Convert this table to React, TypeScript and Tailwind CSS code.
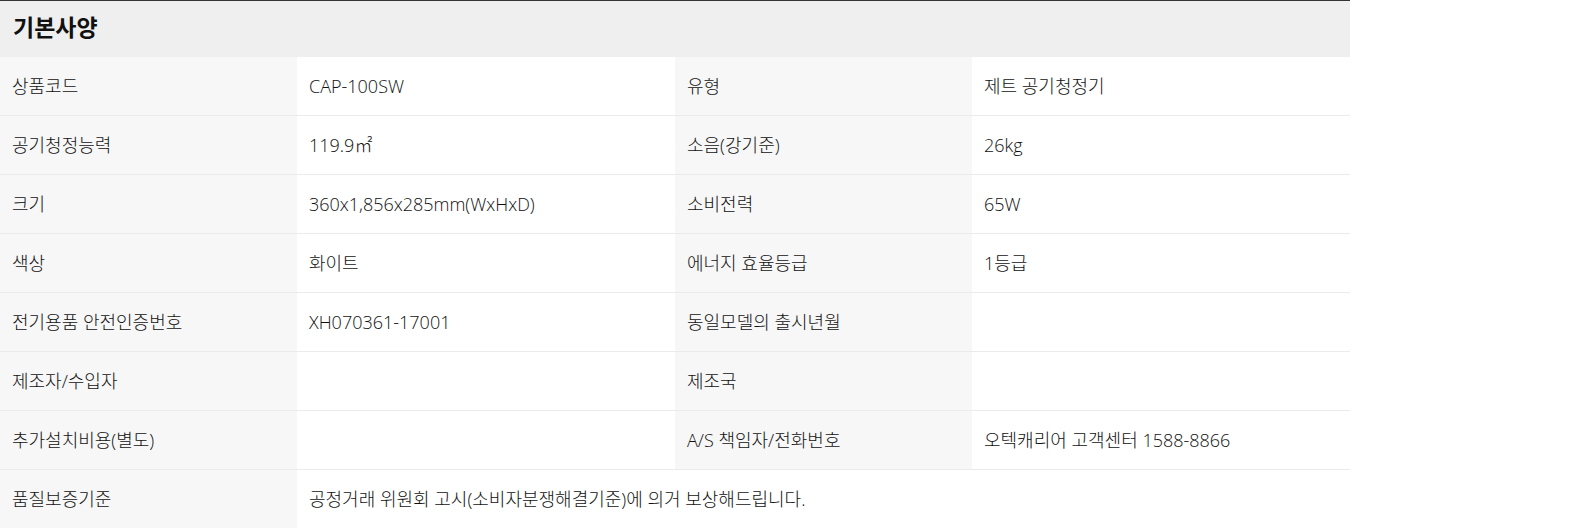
const ROWS: [string, string, string, string][] = [
  ['상품코드', 'CAP-100SW', '유형', '제트 공기청정기'],
  ['공기청정능력', '119.9㎡', '소음(강기준)', '26kg'],
  ['크기', '360x1,856x285mm(WxHxD)', '소비전력', '65W'],
  ['색상', '화이트', '에너지 효율등급', '1등급'],
  ['전기용품 안전인증번호', 'XH070361-17001', '동일모델의 출시년월', ''],
  ['제조자/수입자', '', '제조국', ''],
  ['추가설치비용(별도)', '', 'A/S 책임자/전화번호', '오텍캐리어 고객센터 1588-8866'],
];

const font = { fontFamily: '"Open Sans", "Noto Sans CJK KR", sans-serif' };

function Th({ children }: { children: string }) {
  return (
    <div className="flex items-center bg-[#f7f7f7] pl-[12px] text-[18px] font-light text-[#111]">{children}</div>
  );
}

function Td({ children, span }: { children: string; span?: boolean }) {
  return (
    <div className={`flex items-center bg-white pl-[12px] text-[18px] font-light text-[#111] ${span ? 'col-span-3' : ''}`}>
      {children}
    </div>
  );
}

export default function App() {
  return (
    <div className="w-[1350px] bg-white" style={font}>
      {/* 기본사양 헤더 */}
      <div className="flex h-[57px] items-center border-t border-[#333] bg-[#efefef] pb-[4px] pl-[13px]">
        <h2 className="text-[23px] font-bold text-[#111]">기본사양</h2>
      </div>

      {ROWS.map((r) => (
        <div key={r[0]} className="grid h-[59px] grid-cols-[297px_378px_297px_378px] border-b border-[#ebebeb]">
          <Th>{r[0]}</Th>
          <Td>{r[1]}</Td>
          <Th>{r[2]}</Th>
          <Td>{r[3]}</Td>
        </div>
      ))}

      <div className="grid h-[59px] grid-cols-[297px_378px_297px_378px] border-b border-[#ebebeb]">
        <Th>품질보증기준</Th>
        <Td span>공정거래 위원회 고시(소비자분쟁해결기준)에 의거 보상해드립니다.</Td>
      </div>
    </div>
  );
}
